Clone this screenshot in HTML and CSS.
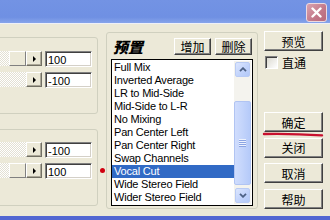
FILE: index.html
```html
<!DOCTYPE html>
<html lang="zh-CN">
<head>
<meta charset="utf-8">
<title>Channel Mixer</title>
<link rel="stylesheet" href="styles.css">
</head>
<body>
<div class="window">
  <div class="titlebar">
    <div class="close">
      <svg width="11" height="11" viewBox="0 0 11 11"><path d="M1.5 1.5 L9.5 9.5 M9.5 1.5 L1.5 9.5" stroke="#fff" stroke-width="2.4" stroke-linecap="round"/></svg>
    </div>
  </div>
  <div class="client">
    <div class="left">
      <div class="group g1">
        <div class="row">
          <div class="track"><div class="thumb"></div></div>
          <div class="arrow"><span class="tri"></span></div>
          <div class="edit">100</div>
        </div>
        <div class="row">
          <div class="track"></div>
          <div class="arrow"><span class="tri"></span></div>
          <div class="edit">-100</div>
        </div>
      </div>
      <div class="group g2">
        <div class="row">
          <div class="track"></div>
          <div class="arrow"><span class="tri"></span></div>
          <div class="edit">-100</div>
        </div>
        <div class="row">
          <div class="track"><div class="thumb"></div></div>
          <div class="arrow"><span class="tri"></span></div>
          <div class="edit">100</div>
        </div>
      </div>
    </div>
    <div class="preset">
      <div class="preset-head">
        <span class="preset-title">预置</span>
        <button class="btn btn-s">增加</button>
        <button class="btn btn-s">删除</button>
      </div>
      <div class="listbox">
        <ul class="items">
          <li>Full Mix</li>
          <li>Inverted Average</li>
          <li>LR to Mid-Side</li>
          <li>Mid-Side to L-R</li>
          <li>No Mixing</li>
          <li>Pan Center Left</li>
          <li>Pan Center Right</li>
          <li>Swap Channels</li>
          <li class="sel">Vocal Cut</li>
          <li>Wide Stereo Field</li>
          <li>Wider Stereo Field</li>
        </ul>
        <div class="vscroll">
          <div class="sb-btn"><span class="sb-face"><svg width="8" height="5" viewBox="0 0 8 5"><polyline points="1,4.2 4,1.2 7,4.2" fill="none" stroke="#4d6185" stroke-width="1.8"/></svg></span></div>
          <div class="sb-track"><div class="sb-thumb"><span class="grip"></span></div></div>
          <div class="sb-btn"><span class="sb-face"><svg width="8" height="5" viewBox="0 0 8 5"><polyline points="1,0.8 4,3.8 7,0.8" fill="none" stroke="#4d6185" stroke-width="1.8"/></svg></span></div>
        </div>
      </div>
    </div>
    <div class="right">
      <button class="btn btn-l">预览</button>
      <label class="check"><span class="box"></span>直通</label>
      <div class="actions">
        <button class="btn btn-l">确定</button>
        <button class="btn btn-l">关闭</button>
        <button class="btn btn-l">取消</button>
        <button class="btn btn-l">帮助</button>
      </div>
    </div>
  </div>
  <div class="bottom"></div>
  <span class="red-dot"></span>
  <svg class="red-line" width="62" height="7" viewBox="0 0 62 7"><path d="M2 3 C 20 2.6, 42 3.2, 60 4.4" fill="none" stroke="#c8102e" stroke-width="2.4" stroke-linecap="round"/></svg>
</div>
</body>
</html>
```
FILE: styles.css
```css
* { box-sizing: border-box; }
html, body { margin: 0; padding: 0; }
body {
  width: 330px;
  height: 220px;
  overflow: hidden;
  background: #ece9d8;
  font: 11px "Liberation Sans", "Noto Sans CJK SC", sans-serif;
  color: #000;
}
.window {
  position: relative;
  height: 220px;
  display: flex;
  flex-direction: column;
}
.titlebar {
  flex: none;
  height: 24px;
  border-bottom: 1px solid #eef0f8;
  background: linear-gradient(#7393e4, #6f90e3 75%, #87a4ea);
  display: flex;
  justify-content: flex-end;
  align-items: flex-start;
  padding: 3px 3px 0 0;
}
.close {
  width: 21px;
  height: 19px;
  border: 1px solid #ecd9e0;
  border-radius: 3px;
  background: linear-gradient(135deg, #d9a3b0, #c27889 60%, #b86a7c);
  display: flex;
  align-items: center;
  justify-content: center;
}
.client {
  flex: none;
  height: 192px;
  display: flex;
  align-items: flex-start;
}
.bottom {
  flex: 1;
  background: #5267d2;
}

/* left side */
.left { flex: none; width: 98px; }
.group {
  margin-left: -20px;
  width: 118px;
  height: 77px;
  border: 1px solid #d0d0bf;
  border-radius: 3px;
  padding: 13px 5px 0 0;
  display: flex;
  flex-direction: column;
  gap: 5px;
}
.g1 { margin-top: 13px; }
.g2 { margin-top: 15px; padding-top: 12px; }
.row {
  display: flex;
  align-items: flex-start;
  height: 16px;
}
.track {
  flex: 1;
  height: 15px;
  display: flex;
  justify-content: flex-end;
  background: repeating-conic-gradient(#ffffff 0 25%, #e3e0d3 0 50%) 0 0 / 2px 2px;
}
.thumb {
  width: 17px;
  height: 15px;
  background: #ece9d8;
  border: 1px solid;
  border-color: #fff #808080 #808080 #fff;
}
.arrow {
  width: 16px;
  height: 15px;
  background: #ece9d8;
  border: 1px solid;
  border-color: #fff #716f64 #716f64 #fff;
  box-shadow: inset -1px -1px #aca899;
  display: flex;
  align-items: center;
  justify-content: center;
}
.tri {
  width: 0;
  height: 0;
  border-left: 3px solid #000;
  border-top: 3px solid transparent;
  border-bottom: 3px solid transparent;
}
.edit {
  width: 47px;
  height: 16px;
  margin-left: 3px;
  background: #fff;
  border: 1px solid;
  border-color: #808080 #fff #fff #808080;
  box-shadow: inset 1px 1px #404040, inset -1px -1px #d4d0c8;
  padding-left: 2px;
  line-height: 16px;
  font-size: 11px;
}

/* preset group */
.preset {
  flex: none;
  width: 152px;
  height: 177px;
  margin: 8px 0 0 8px;
  border: 1px solid #d0d0bf;
  border-radius: 3px;
  padding: 5px 4px 2px 4px;
  display: flex;
  flex-direction: column;
  gap: 4px;
}
.preset-head {
  flex: none;
  height: 17px;
  display: flex;
  align-items: center;
  gap: 4px;
  margin-right: 1px;
  padding-left: 2px;
}
.preset-title {
  flex: 1;
  font: italic 900 15px "Noto Sans CJK SC", sans-serif;
  line-height: 17px;
}
.btn {
  font: 12px "Noto Sans CJK SC", sans-serif;
  color: #000;
  background: #ece9d8;
  border: 1px solid;
  border-color: #fff #404040 #404040 #fff;
  box-shadow: inset -1px -1px #808080;
  padding: 0;
  margin: 0;
  display: flex;
  align-items: center;
  justify-content: center;
}
.btn-s { width: 37px; height: 17px; }
.btn-l { width: 59px; height: 20px; }

.listbox {
  flex: none;
  height: 147px;
  border: 1px solid #000;
  padding: 1px 1px 1px 0;
  background: #fff;
  display: flex;
}
.items {
  flex: 1;
  margin: 0;
  padding: 0;
  list-style: none;
}
.items li {
  height: 13px;
  line-height: 13px;
  padding-left: 2px;
  white-space: nowrap;
  letter-spacing: -0.2px;
}
.items li.sel { background: #316ac5; color: #fff; }
.vscroll {
  width: 17px;
  display: flex;
  flex-direction: column;
  background: #f4f3ee;
}
.sb-btn { flex: none; height: 17px; padding: 1px; }
.sb-face {
  height: 15px;
  border: 1px solid #b9cbf4;
  border-radius: 2px;
  background: linear-gradient(135deg, #dce6fe, #c0d2fb 60%, #b3c9f8);
  display: flex;
  align-items: center;
  justify-content: center;
}
.sb-track { flex: 1; padding: 23px 0 0; }
.sb-thumb {
  height: 84px;
  border: 1px solid #b1c4f2;
  border-radius: 2px;
  background: linear-gradient(90deg, #d0ddfd, #c3d4fb 50%, #b5caf9);
  display: flex;
  align-items: center;
  justify-content: center;
}
.grip {
  width: 7px;
  height: 8px;
  background: repeating-linear-gradient(#eef3fe 0 1px, #8ca5e3 1px 2px);
}

/* right column */
.right {
  flex: none;
  width: 59px;
  margin: 7px 0 0 6px;
  display: flex;
  flex-direction: column;
}
.check {
  margin-top: 5px;
  height: 13px;
  display: flex;
  align-items: center;
  gap: 4px;
  padding-left: 1px;
  font: 12px "Noto Sans CJK SC", sans-serif;
}
.box {
  width: 13px;
  height: 13px;
  border: 1px solid;
  border-color: #808080 #fff #fff #808080;
  box-shadow: inset 1px 1px #404040;
  background: linear-gradient(135deg, #d8d6cc, #fff);
}
.actions {
  margin-top: 43px;
  display: flex;
  flex-direction: column;
  gap: 5.7px;
}

/* annotations */
.red-dot {
  position: absolute;
  left: 100px;
  top: 168px;
  width: 5px;
  height: 5px;
  border-radius: 50%;
  background: #d00010;
}
.red-line {
  position: absolute;
  left: 262px;
  top: 131px;
}
```
